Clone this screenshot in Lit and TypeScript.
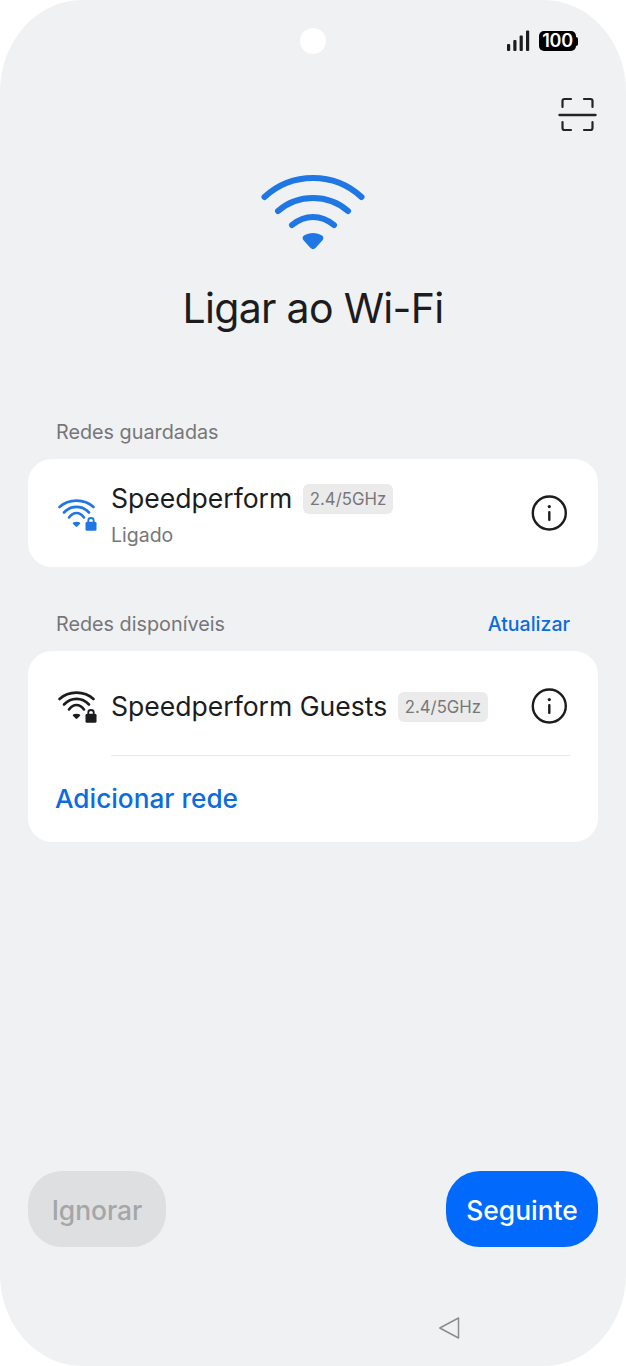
import { LitElement, html, css, svg } from "lit";
import { customElement } from "lit/decorators.js";

const wifi = (cls: string) => html`<svg class="netico ${cls}" width="40" height="36" viewBox="0 0 40 36" fill="none">
  <g stroke="currentColor" stroke-width="2.600" stroke-linecap="round">
    <path d="M2.500 10C11.500 1.500 27.500 1.500 36.500 10"/>
    <path d="M7 15.500C14 8 25 8 32 15.500"/>
    <path d="M12 20.500C16.500 14.500 22.500 14.500 27 20.500"/>
  </g>
  <path d="M16.200 25.600C18 24.400 21 24.400 22.800 25.600C23.400 26 23.400 26.600 22.900 27L20.300 29.500C19.800 30 19.200 30 18.700 29.500L16.100 27C15.600 26.600 15.600 26 16.200 25.600Z" fill="currentColor"/>
  ${svg`<path d="M31.300 25V23.400C31.300 20.200 36.700 20.200 36.700 23.400V25" stroke="currentColor" stroke-width="1.800"/><rect x="28.500" y="24.800" width="11" height="9" rx="1.500" fill="currentColor"/>`}
</svg>`;

const info = html`<svg class="info" width="38" height="38" viewBox="0 0 38 38" fill="none">
  <circle cx="19.300" cy="19" r="16.500" stroke="#1c1c1e" stroke-width="2.400"/>
  <rect x="18.100" y="17" width="2.400" height="10" rx="1" fill="#1c1c1e"/>
  <circle cx="19.300" cy="12.600" r="1.600" fill="#1c1c1e"/>
</svg>`;

@customElement("app-root")
export class AppRoot extends LitElement {
  static styles = css`
    :host {
      display: block;
      width: 626px;
      height: 1366px;
      background: #fff;
      font-family: Inter, "Liberation Sans", sans-serif;
      color: #1c1c1e;
    }
    .screen {
      width: 626px;
      height: 1366px;
      box-sizing: border-box;
      background: #f0f1f3;
      border-radius: 82px / 92px;
      overflow: hidden;
      display: flex;
      flex-direction: column;
      padding: 0 28px;
    }
    .status {
      height: 54px;
      margin-top: 28px;
      display: grid;
      grid-template-columns: 1fr 26px 1fr;
      align-items: start;
      flex: none;
    }
    .cam {
      width: 26px;
      height: 26px;
      border-radius: 50%;
      background: #fff;
    }
    .sysicons {
      display: flex;
      align-items: center;
      justify-content: flex-end;
      gap: 9px;
      margin-right: 20px;
      margin-top: 2px;
    }
    .battery {
      width: 39px;
      height: 21px;
      display: flex;
      align-items: center;
    }
    .batbody {
      width: 37px;
      height: 20px;
      background: #000;
      border-radius: 5px;
      color: #fff;
      font-size: 18px;
      font-weight: 600;
      line-height: 20px;
      text-align: center;
      letter-spacing: -0.3px;
    }
    .nub {
      width: 2px;
      height: 9px;
      background: #000;
      border-radius: 0 2px 2px 0;
    }
    .scanrow {
      display: flex;
      justify-content: flex-end;
      height: 36px;
      margin-top: 15px;
      margin-right: 1px;
      flex: none;
    }
    .hero {
      display: flex;
      flex-direction: column;
      align-items: center;
      margin-top: 42px;
      flex: none;
    }
    h1 {
      margin: 33px 0 0;
      font-size: 41px;
      line-height: 48px;
      font-weight: 400;
      letter-spacing: -0.7px;
    }
    .section {
      display: flex;
      justify-content: space-between;
      align-items: center;
      padding: 0 28px;
      font-size: 19.800px;
      line-height: 28px;
      color: #767678;
      flex: none;
    }
    .s1 { margin-top: 86px; }
    .s2 { margin-top: 43px; }
    .section a {
      color: #0a6cdd;
      font-weight: 500;
      font-size: 19.500px;
    }
    .card {
      background: #fff;
      border-radius: 24px;
      margin-top: 13px;
      flex: none;
    }
    .row {
      display: grid;
      grid-template-columns: 55px 1fr 38px;
      align-items: center;
      padding-left: 28px;
      padding-right: 30px;
      box-sizing: border-box;
    }
    .r1 { height: 108px; padding-top: 2px; }
    .r2 { height: 104px; padding-top: 6px; }
    .netico { margin-left: 1px; margin-top: 2px; }
    .netico.blue { color: #2176e6; }
    .netico.dark { color: #1c1c1e; }
    .title {
      display: flex;
      align-items: center;
      gap: 11px;
      font-size: 26.550px;
      line-height: 34px;
    }
    .tag {
      background: #ebebec;
      color: #77777a;
      font-size: 16.800px;
      line-height: 30px;
      height: 30px;
      padding: 0 6.500px;
      margin-top: 2px;
      border-radius: 6px;
    }
    .sub {
      font-size: 19.500px;
      line-height: 26px;
      color: #77777a;
      margin-top: 7px;
    }
    .info { display: block; }
    .i1 { margin-top: -2px; }
    .add {
      margin-left: 83px;
      margin-right: 28px;
      border-top: 1px solid #e8e8ea;
    }
    .addrow {
      height: 86px;
      display: flex;
      align-items: center;
      padding: 0 27px 2px;
      font-size: 26.200px;
      font-weight: 500;
      color: #0a6cdd;
      box-sizing: border-box;
    }
    .spacer { flex: 1; }
    .buttons {
      display: flex;
      justify-content: space-between;
      flex: none;
    }
    .btn {
      height: 76px;
      box-sizing: border-box;
      padding-top: 2px;
      border-radius: 34px;
      display: flex;
      align-items: center;
      justify-content: center;
      font-size: 26.400px;
      font-weight: 500;
    }
    .skip { width: 138px; background: #dedfe1; color: #a5a6a8; }
    .next { width: 152px; background: #0269fd; color: #fff; }
    .nav {
      display: flex;
      justify-content: flex-end;
      padding-right: 136px;
      padding-top: 69px;
      height: 50px;
      flex: none;
    }
  `;

  render() {
    return html`<div class="screen">
      <div class="status">
        <div></div>
        <div class="cam"></div>
        <div class="sysicons">
          <svg width="23" height="22" viewBox="0 0 23 22" fill="#1c1c1e">
            <rect x="0" y="14" width="3.200" height="7" rx="1"/>
            <rect x="6.300" y="10" width="3.200" height="11" rx="1"/>
            <rect x="12.600" y="5.500" width="3.200" height="15.500" rx="1"/>
            <rect x="19" y="0.500" width="3.200" height="20.500" rx="1"/>
          </svg>
          <div class="battery"><div class="batbody">100</div><div class="nub"></div></div>
        </div>
      </div>
      <div class="scanrow">
        <svg width="40" height="36" viewBox="0 0 40 36" fill="none" stroke="#242426" stroke-width="2.200" stroke-linecap="round">
          <path d="M5.500 10V4Q5.500 2 7.500 2H14"/>
          <path d="M27 2H33.500Q35.500 2 35.500 4V10"/>
          <path d="M2.500 18H38.500" stroke-width="2.400"/>
          <path d="M5.500 25V31Q5.500 33 7.500 33H14"/>
          <path d="M27 33H33.500Q35.500 33 35.500 31V25"/>
        </svg>
      </div>
      <div class="hero">
        <svg width="106" height="76" viewBox="0 0 106 76" fill="none">
          <g stroke="#1f77e5" stroke-width="6" stroke-linecap="round">
            <path d="M4.500 22C32 -3.300 74 -3.300 101.500 22"/>
            <path d="M18 36C38 18.700 68 18.700 88 36"/>
            <path d="M32 50C45 39.300 61 39.300 74 50"/>
          </g>
          <path d="M44 60.500C49 57 57 57 62 60.500C63.800 61.800 63.800 64 62.300 65.500L55.500 73C54 74.500 52 74.500 50.500 73L43.700 65.500C42.200 64 42.200 61.800 44 60.500Z" fill="#1f77e5"/>
        </svg>
        <h1>Ligar ao Wi-Fi</h1>
      </div>

      <div class="section s1"><span>Redes guardadas</span></div>
      <div class="card">
        <div class="row r1">
          ${wifi("blue")}
          <div>
            <div class="title"><span>Speedperform</span><span class="tag">2.4/5GHz</span></div>
            <div class="sub">Ligado</div>
          </div>
          <div class="i1">${info}</div>
        </div>
      </div>

      <div class="section s2"><span>Redes disponíveis</span><a>Atualizar</a></div>
      <div class="card">
        <div class="row r2">
          ${wifi("dark")}
          <div class="title"><span>Speedperform Guests</span><span class="tag">2.4/5GHz</span></div>
          <div>${info}</div>
        </div>
        <div class="add"></div>
        <div class="addrow">Adicionar rede</div>
      </div>

      <div class="spacer"></div>
      <div class="buttons">
        <div class="btn skip">Ignorar</div>
        <div class="btn next">Seguinte</div>
      </div>
      <div class="nav">
        <svg width="24" height="24" viewBox="0 0 24 24" fill="none" stroke="#8d8d90" stroke-width="1.500" stroke-linejoin="round">
          <path d="M1.800 12L20.500 2V22Z"/>
        </svg>
      </div>
    </div>`;
  }
}
